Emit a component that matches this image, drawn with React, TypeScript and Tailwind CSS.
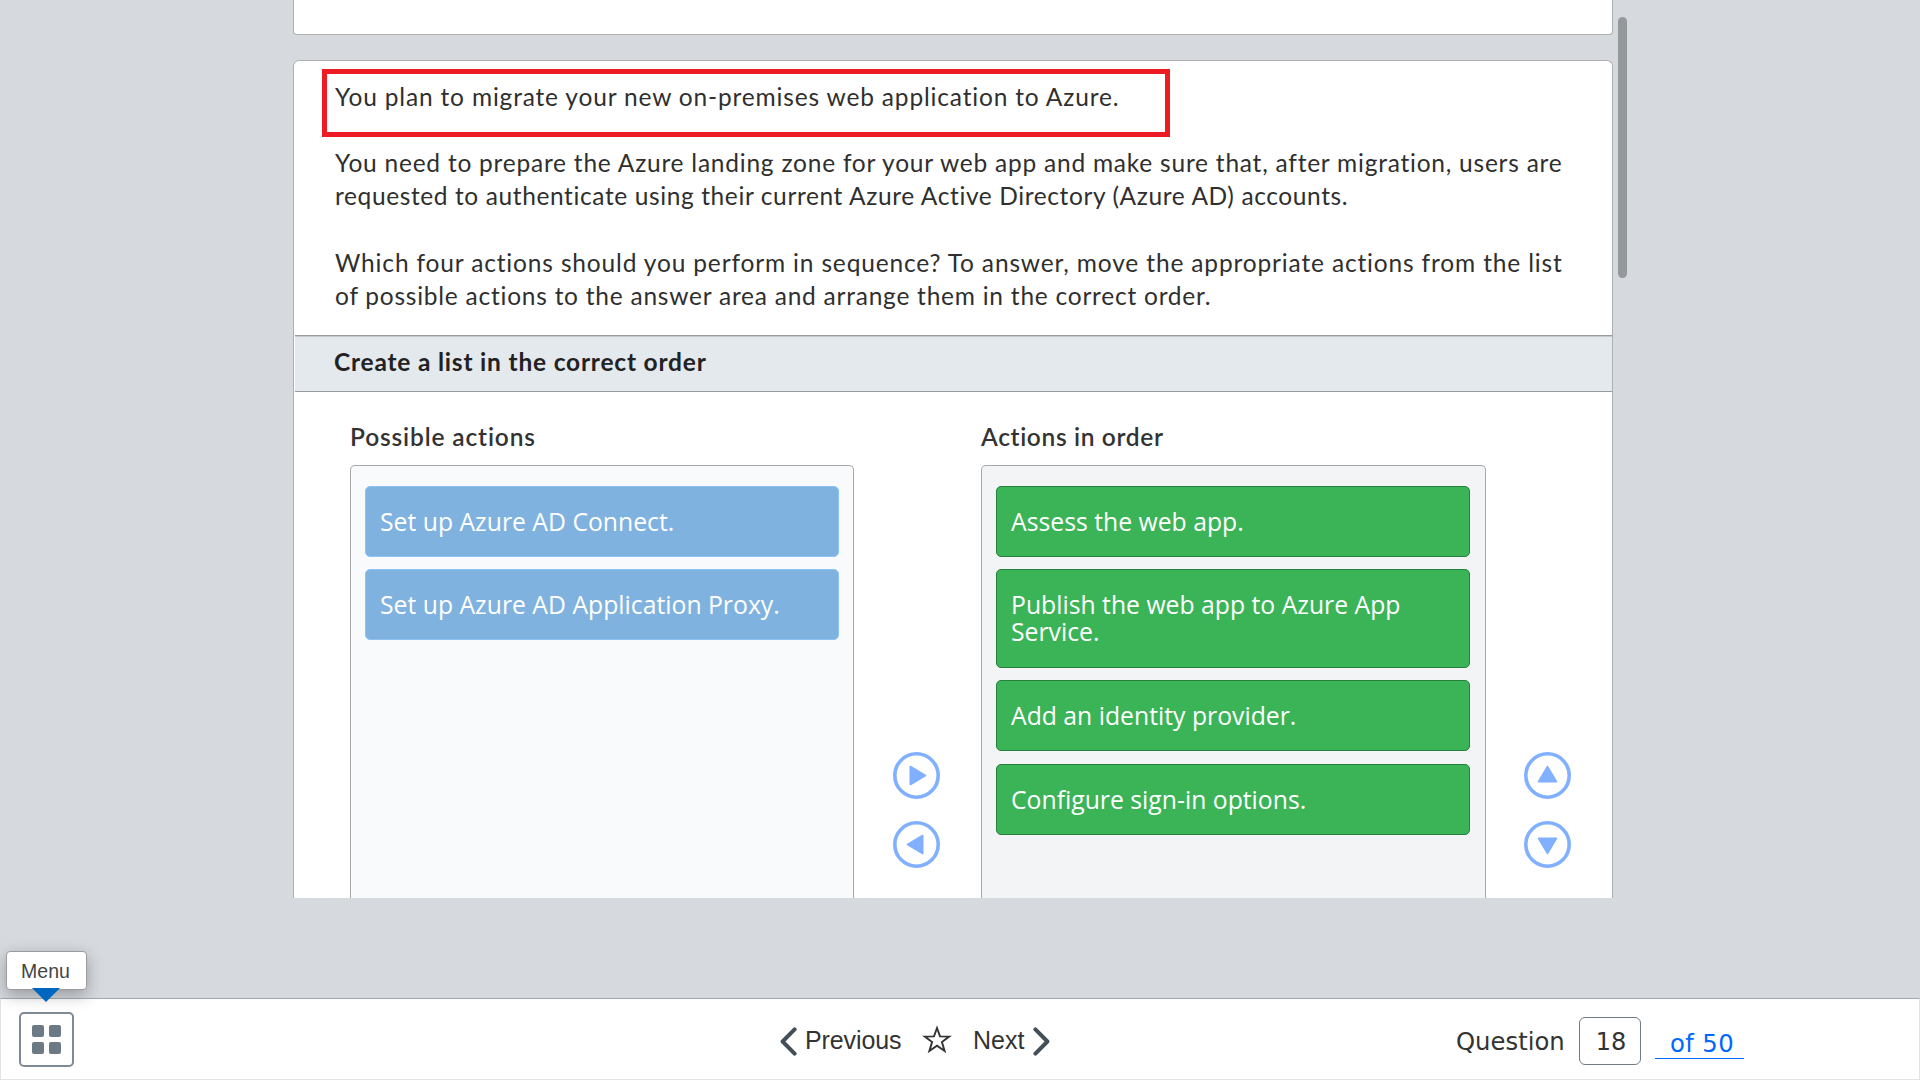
const lato = "font-['Lato',sans-serif]";

function ActionTile({ label, className }: { label: string; className: string }) {
  return (
    <div
      className={`w-[474px] shrink-0 rounded-[5px] border px-[14px] pt-[21px] font-['Open_Sans',sans-serif] text-[24.75px] leading-[27px] text-white ${className}`}
    >
      {label}
    </div>
  );
}

function RoundArrow({ rotate }: { rotate: number }) {
  return (
    <button className="block h-[47px] w-[47px]">
      <svg viewBox="0 0 47 47" className="block h-full w-full">
        <circle cx="23.5" cy="23.5" r="21.7" fill="#fff" stroke="#80b0ff" strokeWidth="3.6" />
        <path
          d="M17.4 14.6 L32.4 23.5 L17.4 32.4 Z"
          fill="#80b0ff"
          stroke="#80b0ff"
          strokeWidth="1.8"
          strokeLinejoin="round"
          transform={`rotate(${rotate} 23.5 23.5)`}
        />
      </svg>
    </button>
  );
}

function Chevron({ flip }: { flip?: boolean }) {
  return (
    <svg viewBox="0 0 17 29" className={flip ? "h-[29px] w-[17px] -scale-x-100" : "h-[29px] w-[17px]"}>
      <path
        d="M14.6 2.4 L2.6 14.5 L14.6 26.6"
        fill="none"
        stroke="#434f59"
        strokeWidth="4"
        strokeLinecap="round"
        strokeLinejoin="round"
      />
    </svg>
  );
}

function QuestionCard() {
  return (
    <section className="relative mt-[25px] h-[838px] w-[1320px] rounded-t-[6px] border border-b-0 border-[#adafb1] bg-white">
      <div className={`h-[274px] pl-[41px] pt-[19px] text-[24.5px] leading-[33.3px] whitespace-nowrap text-[#2f2f2f] ${lato}`}>
        <p className="tracking-[0.83px]">You plan to migrate your new on-premises web application to Azure.</p>
        <p className="mt-[33px] leading-[33px]">
          <span className="block tracking-[0.77px]">
            You need to prepare the Azure landing zone for your web app and make sure that, after migration, users are
          </span>
          <span className="block tracking-[0.61px]">
            requested to authenticate using their current Azure Active Directory (Azure AD) accounts.
          </span>
        </p>
        <p className="mt-[33.9px]">
          <span className="block tracking-[0.845px]">
            Which four actions should you perform in sequence? To answer, move the appropriate actions from the list
          </span>
          <span className="block tracking-[0.76px]">
            of possible actions to the answer area and arrange them in the correct order.
          </span>
        </p>
      </div>
      <div className="absolute left-[28px] top-[8px] h-[68px] w-[848px] border-[5px] border-[#ed1c24]" />

      <h2
        className={`ml-px h-[57px] border-y border-[#999c9f] bg-[#e4e9ed] pl-[39px] pt-[9px] text-[24.5px] font-bold leading-[33px] tracking-[0.8px] text-[#222] shadow-[inset_0_1px_0_#c4c8cc] ${lato}`}
      >
        Create a list in the correct order
      </h2>

      <div className="flex h-[506px] pl-[56px] pt-[28px]">
        <div className="w-[504px]">
          <h3 className={`h-[45px] text-[24.5px] font-semibold leading-[34px] tracking-[0.85px] text-[#333] ${lato}`}>
            Possible actions
          </h3>
          <div className="flex h-[433px] flex-col gap-[12px] rounded-t-[5px] border border-b-0 border-[#a5a7a9] bg-[#f9fafc] pl-[14px] pt-[20px]">
            <ActionTile label="Set up Azure AD Connect." className="h-[71px] border-[#8cc3f5] bg-[#80b2e0]" />
            <ActionTile label="Set up Azure AD Application Proxy." className="h-[71px] border-[#8cc3f5] bg-[#80b2e0]" />
          </div>
        </div>
        <div className="flex w-[127px] flex-col gap-[22px] pl-[39px] pt-[332px]">
          <RoundArrow rotate={0} />
          <RoundArrow rotate={180} />
        </div>
        <div className="w-[505px]">
          <h3 className={`h-[45px] text-[24.5px] font-semibold leading-[34px] tracking-[0.65px] text-[#333] ${lato}`}>
            Actions in order
          </h3>
          <div className="flex h-[433px] flex-col rounded-t-[5px] border border-b-0 border-[#a5a7a9] bg-[#f3f4f6] pl-[14px] pt-[20px]">
            <ActionTile label="Assess the web app." className="h-[71px] border-[#27803d] bg-[#3bb357]" />
            <ActionTile label="Publish the web app to Azure App Service." className="mt-[12px] h-[99px] border-[#27803d] bg-[#3bb357]" />
            <ActionTile label="Add an identity provider." className="mt-[12px] h-[71px] border-[#27803d] bg-[#3bb357]" />
            <ActionTile label="Configure sign-in options." className="mt-[13px] h-[71px] border-[#27803d] bg-[#3bb357]" />
          </div>
        </div>
        <div className="flex flex-col gap-[22px] pl-[38px] pt-[332px]">
          <RoundArrow rotate={-90} />
          <RoundArrow rotate={90} />
        </div>
      </div>
    </section>
  );
}

function MenuButton() {
  return (
    <div className="relative ml-[18px] mt-[13px] h-[55px] w-[55px] self-start">
      <button className="grid h-full w-full grid-cols-[12px_12px] content-center justify-center gap-[5px] rounded-[5px] border-2 border-[#7e8b96] bg-white">
        <span className="h-[12px] w-[12px] rounded-[2px] bg-[#6b7a85]" />
        <span className="h-[12px] w-[12px] rounded-[2px] bg-[#6b7a85]" />
        <span className="h-[12px] w-[12px] rounded-[2px] bg-[#6b7a85]" />
        <span className="h-[12px] w-[12px] rounded-[2px] bg-[#6b7a85]" />
      </button>
      <div className="absolute left-[-13px] top-[-61px] h-[39px] w-[81px] rounded-[4px] border border-[#9a9c9e] bg-white pr-[2px] pt-[7px] text-center text-[19.5px] leading-[24px] text-[#444] shadow-[0_5px_16px_rgba(0,0,0,0.3)]">
        Menu
      </div>
      <svg viewBox="0 0 28 14" className="absolute left-[13px] top-[-24px] h-[14px] w-[28px]">
        <path d="M0 0 H28 L14 14 Z" fill="#0067c0" />
      </svg>
    </div>
  );
}

export default function App() {
  return (
    <div className="flex h-[1080px] w-[1920px] flex-col overflow-hidden bg-[#d6d9de] font-['Liberation_Sans',sans-serif]">
      <main className="flex h-[998px] shrink-0 pl-[293px]">
        <div className="h-[898px] overflow-hidden">
          <div className="h-[35px] w-[1320px] rounded-b-[4px] border border-t-0 border-[#adafb1] bg-white" />
          <QuestionCard />
        </div>
        <div className="ml-[5px] mt-[17px] h-[261px] w-[9px] rounded-full bg-[#94999c]" />
      </main>

      <footer className="flex h-[82px] shrink-0 border border-[#e2e3e4] border-t-[#a3a9ae] bg-white text-[#333]">
        <MenuButton />
        <nav className="ml-[706px] flex h-[84px] items-center text-[25px] leading-[30px]">
          <Chevron />
          <span className="ml-[8px] w-[96px] pb-[2px] tracking-[-0.1px]">Previous</span>
          <svg viewBox="0 0 30 29" className="ml-[21px] h-[29px] w-[30px] -translate-y-[2px]">
            <path
              d="M15 3 L18 11.4 L27.2 11.6 L19.9 17.1 L22.6 26 L15 20.7 L7.4 26 L10.1 17.1 L2.8 11.6 L12 11.4 Z"
              fill="none"
              stroke="#333"
              strokeWidth="1.9"
              strokeLinejoin="miter"
            />
          </svg>
          <span className="ml-[21px] w-[51px] pb-[2px]">Next</span>
          <span className="ml-[9px]">
            <Chevron flip />
          </span>
        </nav>
        <div className="ml-[406px] flex h-[84px] items-center font-['DejaVu_Sans',sans-serif] text-[24.3px] leading-[30px]">
          <span className="w-[123px] pt-[2px]">Question</span>
          <span className="flex h-[48px] w-[62px] items-center justify-center rounded-[6px] border border-[#6f7c87] pl-[2px] pt-px text-[24px]">
            18
          </span>
          <span className="ml-[14px] mt-[3px] h-[32px] w-[89px] border-b border-[#0067ff] pl-[15px] pt-[2px] text-[24.3px] leading-[30px] tracking-[0.4px] whitespace-nowrap text-[#0067ff]">
            of 50
          </span>
        </div>
      </footer>
    </div>
  );
}
